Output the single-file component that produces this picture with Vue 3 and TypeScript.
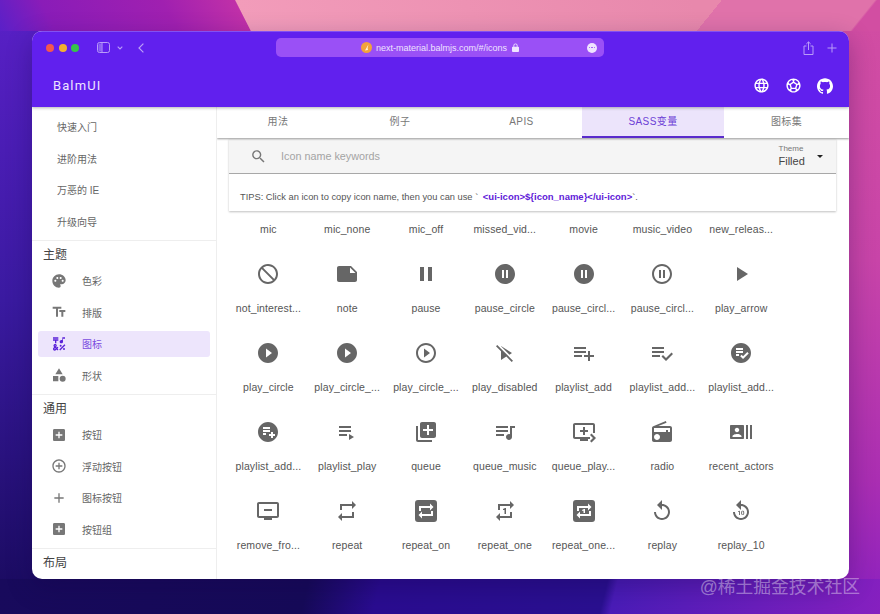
<template>
  <div class="desk">
    <div class="win">
      <header class="top">
        <div class="chrome">
          <span class="light red"></span>
          <span class="light amber"></span>
          <span class="light green"></span>
          <svg class="side-toggle" viewBox="0 0 13 11" width="13" height="11">
            <rect x="0.5" y="0.5" width="12" height="10" rx="2" fill="none" stroke="#b99cf8" />
            <rect x="1.5" y="1.5" width="3" height="8" fill="#8d62f3" />
            <line x1="5" y1="1" x2="5" y2="10" stroke="#b99cf8" />
          </svg>
          <svg class="chev" viewBox="0 0 6 4" width="6" height="4">
            <path d="M.7.7 3 3l2.3-2.3" fill="none" stroke="#b99cf8" stroke-width="1.1" />
          </svg>
          <svg class="back" viewBox="0 0 6 10" width="6" height="10">
            <path d="M5.4.6 1 5l4.4 4.4" fill="none" stroke="#b99cf8" stroke-width="1.2" />
          </svg>
          <div class="address">
            <svg class="favicon" viewBox="0 0 11 11" width="11" height="11">
              <circle cx="5.5" cy="5.5" r="5.5" fill="#f2a33a" />
              <path d="M4 8.5 7.4 2.5 6.6 6 7 8z" fill="#fff3d8" />
            </svg>
            <span class="url">next-material.balmjs.com/#/icons</span>
            <svg class="lock" viewBox="0 0 8 10" width="7" height="9">
              <path d="M1 4h.6V2.8a2.4 2.4 0 0 1 4.8 0V4H7a1 1 0 0 1 1 1v4a1 1 0 0 1-1 1H1a1 1 0 0 1-1-1V5a1 1 0 0 1 1-1zm1.6 0h2.8V2.8a1.4 1.4 0 0 0-2.8 0V4z" fill="#efe4ff" />
            </svg>
            <span class="more"><i></i><i></i><i></i></span>
          </div>
          <svg class="share" viewBox="0 0 11 14" width="11" height="14">
            <path d="M3.5 5H1v8.5h9V5H7.5M5.5 9V1M3.3 3 5.5.9 7.7 3" fill="none" stroke="#b99cf8" stroke-width="1" />
          </svg>
          <svg class="plus" viewBox="0 0 10 10" width="10" height="10">
            <path d="M5 .5v9M.5 5h9" stroke="#b99cf8" stroke-width="1" />
          </svg>
        </div>
        <div class="appbar">
          <span class="brand">BalmUI</span>
          <div class="actions">
            <svg v-for="a in appActions" :key="a.name" viewBox="0 0 24 24" :width="a.size" :height="a.size" fill="#fff">
              <path :d="a.d" />
            </svg>
          </div>
        </div>
      </header>

      <div class="body">
        <aside class="side">
          <section v-for="(group, gi) in nav" :key="gi" class="group">
            <h4 v-if="group.title">{{ group.title }}</h4>
            <a
              v-for="item in group.items"
              :key="item.label"
              class="nav-item"
              :class="{ active: item.active, plain: !item.icon }"
            >
              <svg v-if="item.icon" viewBox="0 0 24 24" width="16" height="16" fill="currentColor">
                <path :d="item.icon" fill-rule="evenodd" />
              </svg>
              <span>{{ item.label }}</span>
            </a>
          </section>
        </aside>

        <main class="main">
          <nav class="tabs">
            <a v-for="t in tabs" :key="t.label" class="tab" :class="{ on: t.on }" :style="{ width: t.w + 'px' }">{{ t.label }}</a>
          </nav>

          <div class="panel">
            <div class="search">
              <svg viewBox="0 0 24 24" width="17" height="17" fill="#777">
                <path d="M15.5 14h-.79l-.28-.27C15.41 12.59 16 11.11 16 9.5 16 5.91 13.09 3 9.5 3S3 5.91 3 9.5 5.91 16 9.5 16c1.61 0 3.09-.59 4.23-1.57l.27.28v.79l5 4.99L20.49 19l-4.99-5zm-6 0C7.01 14 5 11.99 5 9.5S7.01 5 9.5 5 14 7.01 14 9.5 11.99 14 9.5 14z" />
              </svg>
              <span class="placeholder">Icon name keywords</span>
              <div class="theme">
                <small>Theme</small>
                <span>Filled</span>
              </div>
              <i class="caret"></i>
            </div>
            <p class="tips">
              TIPS: Click an icon to copy icon name, then you can use `
              <code>&lt;ui-icon&gt;${icon_name}&lt;/ui-icon&gt;</code>`.
            </p>
          </div>

          <div class="grid">
            <div v-for="(ic, i) in icons" :key="i" class="cell">
              <svg v-if="ic.d" viewBox="0 0 24 24" width="24" height="24" fill="#666">
                <path :d="ic.d" fill-rule="evenodd" />
              </svg>
              <span class="name">{{ ic.name }}</span>
            </div>
          </div>
        </main>
      </div>
    </div>
    <span class="mark">@稀土掘金技术社区</span>
  </div>
</template>

<script setup lang="ts">
const circle = 'M12 2C6.48 2 2 6.48 2 12s4.48 10 10 10 10-4.48 10-10S17.52 2 12 2z'
const addBox = 'M19 3H5c-1.11 0-2 .9-2 2v14c0 1.1.89 2 2 2h14c1.1 0 2-.9 2-2V5c0-1.1-.9-2-2-2zm-2 10h-4v4h-2v-4H7v-2h4V7h2v4h4v2z'
const squareOn = 'M4 1h16a3 3 0 0 1 3 3v16a3 3 0 0 1-3 3H4a3 3 0 0 1-3-3V4a3 3 0 0 1 3-3z'
const repeatInner = 'M5 7h11V4.5L19.5 8 16 11.5V9H7v3H5zM19 17H8v2.5L4.5 16 8 12.5V15h9v-3h2z'

const appActions = [
  {
    name: 'language',
    size: 17,
    d: 'M11.99 2C6.47 2 2 6.48 2 12s4.47 10 9.99 10C17.52 22 22 17.52 22 12S17.52 2 11.99 2zm6.93 6h-2.95c-.32-1.25-.78-2.45-1.38-3.56 1.84.63 3.37 1.91 4.33 3.56zM12 4.04c.83 1.2 1.48 2.53 1.91 3.96h-3.82c.43-1.43 1.08-2.76 1.91-3.96zM4.26 14C4.1 13.36 4 12.69 4 12s.1-1.36.26-2h3.38c-.08.66-.14 1.32-.14 2 0 .68.06 1.34.14 2H4.26zm.82 2h2.95c.32 1.25.78 2.45 1.38 3.56-1.84-.63-3.37-1.9-4.33-3.56zm2.95-8H5.08c.96-1.66 2.49-2.93 4.33-3.56C8.81 5.55 8.35 6.75 8.03 8zM12 19.96c-.83-1.2-1.48-2.53-1.91-3.96h3.82c-.43 1.43-1.08 2.76-1.91 3.96zM14.34 14H9.66c-.09-.66-.16-1.32-.16-2 0-.68.07-1.35.16-2h4.68c.09.65.16 1.32.16 2 0 .68-.07 1.34-.16 2zm.25 5.56c.6-1.11 1.06-2.31 1.38-3.56h2.95c-.96 1.65-2.49 2.93-4.33 3.56zM16.36 14c.08-.66.14-1.32.14-2 0-.68-.06-1.34-.14-2h3.38c.16.64.26 1.31.26 2s-.1 1.36-.26 2h-3.38z'
  },
  {
    name: 'soccer',
    size: 17,
    d: 'M12 2C6.48 2 2 6.48 2 12s4.48 10 10 10 10-4.48 10-10S17.52 2 12 2zm1 3.3l1.35-.95c1.82.56 3.37 1.76 4.38 3.34l-.39 1.34-1.35.46L13 6.7V5.3zm-3.35-.95L11 5.3v1.4L7.01 9.49l-1.35-.46-.39-1.34c1.01-1.57 2.56-2.77 4.38-3.34zM7.08 17.11l-1.14.1C4.73 15.81 4 13.99 4 12c0-.12.01-.23.02-.35l1-.73 1.38.48 1.46 4.34-.78 1.37zm7.42 2.48c-.79.26-1.63.41-2.5.41s-1.71-.15-2.5-.41l-.69-1.49.64-1.1h5.11l.64 1.11-.7 1.48zM14.27 15H9.73l-1.35-4.02L12 8.44l3.63 2.54L14.27 15zm3.79 2.21l-1.14-.1-.79-1.37 1.46-4.34 1.39-.47 1 .73c.01.11.02.22.02.34 0 1.99-.73 3.81-1.94 5.21z'
  },
  {
    name: 'github',
    size: 16,
    d: 'M12 .297c-6.63 0-12 5.373-12 12 0 5.303 3.438 9.8 8.205 11.385.6.113.82-.258.82-.577 0-.285-.01-1.04-.015-2.04-3.338.724-4.042-1.61-4.042-1.61C4.422 18.07 3.633 17.7 3.633 17.7c-1.087-.744.084-.729.084-.729 1.205.084 1.838 1.236 1.838 1.236 1.07 1.835 2.809 1.305 3.495.998.108-.776.417-1.305.76-1.605-2.665-.3-5.466-1.332-5.466-5.93 0-1.31.465-2.38 1.235-3.22-.135-.303-.54-1.523.105-3.176 0 0 1.005-.322 3.3 1.23.96-.267 1.98-.399 3-.405 1.02.006 2.04.138 3 .405 2.28-1.552 3.285-1.23 3.285-1.23.645 1.653.24 2.873.12 3.176.765.84 1.23 1.91 1.23 3.22 0 4.61-2.805 5.625-5.475 5.92.42.36.81 1.096.81 2.22 0 1.606-.015 2.896-.015 3.286 0 .315.21.69.825.57C20.565 22.092 24 17.592 24 12.297c0-6.627-5.373-12-12-12'
  }
]

const nav = [
  {
    title: '',
    items: [{ label: '快速入门' }, { label: '进阶用法' }, { label: '万恶的 IE' }, { label: '升级向导' }]
  },
  {
    title: '主题',
    items: [
      {
        label: '色彩',
        icon: 'M12 2C6.49 2 2 6.49 2 12s4.49 10 10 10c1.38 0 2.5-1.12 2.5-2.5 0-.61-.23-1.2-.64-1.67-.08-.1-.13-.21-.13-.33 0-.28.22-.5.5-.5H16c3.31 0 6-2.69 6-6 0-4.96-4.49-9-10-9zm5.5 11c-.83 0-1.5-.67-1.5-1.5s.67-1.5 1.5-1.5 1.5.67 1.5 1.5-.67 1.5-1.5 1.5zm-3-4c-.83 0-1.5-.67-1.5-1.5S13.67 6 14.5 6s1.5.67 1.5 1.5S15.33 9 14.5 9zM5 11.5c0-.83.67-1.5 1.5-1.5s1.5.67 1.5 1.5S7.33 13 6.5 13 5 12.33 5 11.5zm6-4c0 .83-.67 1.5-1.5 1.5S8 8.33 8 7.5 8.67 6 9.5 6s1.5.67 1.5 1.5z'
      },
      { label: '排版', icon: 'M2.5 4v3h5v12h3V7h5V4h-13zm19 5h-9v3h3v7h3v-7h3V9z' },
      {
        label: '图标',
        active: true,
        icon: 'M3 2h8v2H3zM6 11h2V7h3V5H3v2h3zM12.4 20.18l7.78-7.78 1.42 1.42-7.78 7.78zM13 14.5a1.5 1.5 0 1 0 3 0 1.5 1.5 0 1 0-3 0zM18 19.5a1.5 1.5 0 1 0 3 0 1.5 1.5 0 1 0-3 0zM15.5 11c1.38 0 2.5-1.12 2.5-2.5V4h3V2h-4v4.51C16.58 6.19 16.07 6 15.5 6 14.12 6 13 7.12 13 8.5s1.12 2.5 2.5 2.5zM9.74 15.96l-1.41 1.41-.71-.71.35-.35c.98-.98.98-2.56 0-3.54-.49-.49-1.13-.73-1.77-.73-.64 0-1.28.24-1.77.73-.98.98-.98 2.56 0 3.54l.35.35-1.06 1.06c-.98.98-.98 2.56 0 3.54.5.5 1.14.74 1.78.74s1.28-.24 1.77-.73l1.06-1.06 1.41 1.41 1.41-1.41-1.41-1.41 1.41-1.41-1.41-1.41zM5.85 14.2c.12-.12.26-.15.35-.15s.23.03.35.15c.19.2.19.51 0 .71l-.35.35-.35-.36c-.2-.19-.2-.51 0-.7zm0 5.65c-.12.12-.26.15-.35.15s-.23-.03-.35-.15c-.2-.2-.2-.51 0-.71l1.06-1.06.71.71-1.07 1.06z'
      },
      { label: '形状', icon: 'M12 2l-5.5 9h11zM13 17.5a4.5 4.5 0 1 0 9 0 4.5 4.5 0 1 0-9 0zM3 13.5h8v8H3z' }
    ]
  },
  {
    title: '通用',
    items: [
      { label: '按钮', icon: addBox },
      {
        label: '浮动按钮',
        icon: 'M13 7h-2v4H7v2h4v4h2v-4h4v-2h-4V7zm-1-5C6.48 2 2 6.48 2 12s4.48 10 10 10 10-4.48 10-10S17.52 2 12 2zm0 18c-4.41 0-8-3.59-8-8s3.59-8 8-8 8 3.59 8 8-3.59 8-8 8z'
      },
      { label: '图标按钮', icon: 'M19 13h-6v6h-2v-6H5v-2h6V5h2v6h6v2z' },
      { label: '按钮组', icon: addBox }
    ]
  },
  { title: '布局', items: [] }
]

const tabs = [
  { label: '用法', w: 122 },
  { label: '例子', w: 122 },
  { label: 'APIS', w: 121 },
  { label: 'SASS变量', w: 142, on: true },
  { label: '图标集', w: 125 }
]

const icons: { name: string; d?: string }[] = [
  { name: 'mic' },
  { name: 'mic_none' },
  { name: 'mic_off' },
  { name: 'missed_vid...' },
  { name: 'movie' },
  { name: 'music_video' },
  { name: 'new_releas...' },
  {
    name: 'not_interest...',
    d: 'M12 2C6.48 2 2 6.48 2 12s4.48 10 10 10 10-4.48 10-10S17.52 2 12 2zm0 18c-4.42 0-8-3.58-8-8 0-1.85.63-3.55 1.69-4.9L16.9 18.31C15.55 19.37 13.85 20 12 20zm6.31-3.1L7.1 5.69C8.45 4.63 10.15 4 12 4c4.42 0 8 3.58 8 8 0 1.85-.63 3.55-1.69 4.9z'
  },
  { name: 'note', d: 'M22 10l-6-6H4c-1.1 0-2 .9-2 2v12.01c0 1.1.9 1.99 2 1.99l16-.01c1.1 0 2-.89 2-1.99v-8zm-7-4.5l5.5 5.5H15V5.5z' },
  { name: 'pause', d: 'M6 19h4V5H6v14zm8-14v14h4V5h-4z' },
  { name: 'pause_circle', d: circle + 'M9 8h2v8H9zM13 8h2v8h-2z' },
  { name: 'pause_circl...', d: circle + 'M9 8h2v8H9zM13 8h2v8h-2z' },
  {
    name: 'pause_circl...',
    d: 'M9 16h2V8H9v8zm3-14C6.48 2 2 6.48 2 12s4.48 10 10 10 10-4.48 10-10S17.52 2 12 2zm0 18c-4.41 0-8-3.59-8-8s3.59-8 8-8 8 3.59 8 8-3.59 8-8 8zm1-4h2V8h-2v8z'
  },
  { name: 'play_arrow', d: 'M8 5v14l11-7z' },
  { name: 'play_circle', d: circle + 'M10 7.5v9l6-4.5z' },
  { name: 'play_circle_...', d: circle + 'M10 7.5v9l6-4.5z' },
  {
    name: 'play_circle_...',
    d: 'M10 16.5l6-4.5-6-4.5v9zM12 2C6.48 2 2 6.48 2 12s4.48 10 10 10 10-4.48 10-10S17.52 2 12 2zm0 18c-4.41 0-8-3.59-8-8s3.59-8 8-8 8 3.59 8 8-3.59 8-8 8z'
  },
  { name: 'play_disabled', d: 'M8 5.19V5l11 7-2.55 1.63L8 5.19zm12 14.54-5.11-5.11L8 7.73 4.27 4 3 5.27l5 5V19l5.33-3.4 5.4 5.4L20 19.73z' },
  { name: 'playlist_add', d: 'M14 10H2v2h12v-2zm0-4H2v2h12V6zm4 8v-4h-2v4h-4v2h4v4h2v-4h4v-2h-4zM2 16h8v-2H2v2z' },
  { name: 'playlist_add...', d: 'M14 10H2v2h12v-2zm0-4H2v2h12V6zM2 16h8v-2H2v2zm19.5-4.5L23 13l-6.99 7-4.51-4.5L13 14l3.01 3 5.49-5.5z' },
  { name: 'playlist_add...', d: circle + 'M7 7h7v2H7zM7 10h7v2H7zM7 13h3v2H7zM14.05 18l-2.83-2.83 1.41-1.41 1.41 1.41L18.29 11l1.42 1.41z' },
  { name: 'playlist_add...', d: circle + 'M7 7h7v2H7zM7 10h7v2H7zM7 13h3v2H7zM15 12h2v2h2v2h-2v2h-2v-2h-2v-2h2z' },
  { name: 'playlist_play', d: 'M4 10h12v2H4zm0-4h12v2H4zm0 8h8v2H4zm10 0v6l5-3z' },
  {
    name: 'queue',
    d: 'M4 6H2v14c0 1.1.9 2 2 2h14v-2H4V6zm16-4H8c-1.1 0-2 .9-2 2v12c0 1.1.9 2 2 2h12c1.1 0 2-.9 2-2V4c0-1.1-.9-2-2-2zm-1 9h-4v4h-2v-4H9V9h4V5h2v4h4v2z'
  },
  {
    name: 'queue_music',
    d: 'M15 6H3v2h12V6zm0 4H3v2h12v-2zM3 16h8v-2H3v2zM17 6v8.18c-.31-.11-.65-.18-1-.18-1.66 0-3 1.34-3 3s1.34 3 3 3 3-1.34 3-3V8h3V6h-5z'
  },
  {
    name: 'queue_play...',
    d: 'M21 3H3c-1.11 0-2 .89-2 2v12c0 1.1.89 2 2 2h5v2h8v-2h2v-2H3V5h18v8h2V5c0-1.11-.9-2-2-2zm-8 7V7h-2v3H8v2h3v3h2v-3h3v-2h-3zm11 8l-4.5 4.5L18 21l3-3-3-3 1.5-1.5L24 18z'
  },
  {
    name: 'radio',
    d: 'M3.24 6.15C2.51 6.43 2 7.17 2 8v12c0 1.1.89 2 2 2h16c1.11 0 2-.9 2-2V8c0-1.11-.89-2-2-2H8.3l8.26-3.34L15.88 1 3.24 6.15zM7 20c-1.66 0-3-1.34-3-3s1.34-3 3-3 3 1.34 3 3-1.34 3-3 3zm13-8h-2v-2h-2v2H4V8h16v4z'
  },
  {
    name: 'recent_actors',
    d: 'M21 5v14h2V5h-2zm-4 14h2V5h-2v14zM14 5H2c-.55 0-1 .45-1 1v12c0 .55.45 1 1 1h12c.55 0 1-.45 1-1V6c0-.55-.45-1-1-1zM8 7.75c1.24 0 2.25 1.01 2.25 2.25S9.24 12.25 8 12.25 5.75 11.24 5.75 10 6.76 7.75 8 7.75zM12.5 17h-9v-.75c0-1.5 3-2.25 4.5-2.25s4.5.75 4.5 2.25V17z'
  },
  {
    name: 'remove_fro...',
    d: 'M21 3H3c-1.11 0-2 .89-2 2v12c0 1.1.89 2 2 2h5v2h8v-2h5c1.1 0 1.99-.9 1.99-2L23 5c0-1.11-.9-2-2-2zm0 14H3V5h18v12zm-5-7v2H8v-2h8z'
  },
  { name: 'repeat', d: 'M7 7h10v3l4-4-4-4v3H5v6h2V7zm10 10H7v-3l-4 4 4 4v-3h12v-6h-2v4z' },
  { name: 'repeat_on', d: squareOn + repeatInner },
  { name: 'repeat_one', d: 'M7 7h10v3l4-4-4-4v3H5v6h2V7zm10 10H7v-3l-4 4 4 4v-3h12v-6h-2v4zm-4-2V9h-1l-2 1v1h1.5v4H13z' },
  { name: 'repeat_one...', d: squareOn + repeatInner + 'M13 14V10h-1l-2 .9v.9h1.5V14z' },
  { name: 'replay', d: 'M12 5V1L7 6l5 5V7c3.31 0 6 2.69 6 6s-2.69 6-6 6-6-2.69-6-6H4c0 4.42 3.58 8 8 8s8-3.58 8-8-3.58-8-8-8z' },
  {
    name: 'replay_10',
    d: 'M12 5V1L7 6l5 5V7c3.31 0 6 2.69 6 6s-2.69 6-6 6-6-2.69-6-6H4c0 4.42 3.58 8 8 8s8-3.58 8-8-3.58-8-8-8zm-1.1 11H10v-3.3L9 13v-.7l1.8-.6h.1V16zm4.3-1.8c0 .3 0 .6-.1.8l-.3.6s-.3.3-.5.3-.4.1-.6.1-.4 0-.6-.1-.3-.2-.5-.3-.2-.3-.3-.6-.1-.5-.1-.8v-.7c0-.3 0-.6.1-.8l.3-.6s.3-.3.5-.3.4-.1.6-.1.4 0 .6.1c.2.1.3.2.5.3s.2.3.3.6.1.5.1.8v.7zm-.9-.8v-.5s-.1-.2-.1-.3-.1-.1-.2-.2-.2-.1-.3-.1-.2 0-.3.1l-.2.2s-.1.2-.1.3v2s.1.2.1.3.1.1.2.2.2.1.3.1.2 0 .3-.1l.2-.2s.1-.2.1-.3v-1.5z'
  }
]
</script>

<style>
html,
body {
  margin: 0;
  height: 100%;
  overflow: hidden;
}
</style>

<style scoped>
.desk {
  position: relative;
  box-sizing: border-box;
  width: 880px;
  height: 614px;
  padding: 31px 31px 35px 32px;
  font-family: 'Liberation Sans', 'Noto Sans CJK SC', sans-serif;
  overflow: hidden;
  /* wallpaper: strips round the window, each with its own wedges */
  background:
    linear-gradient(129deg, transparent 0 561px, #e072aa 561px 680px, #d24ea2 682px) 0 0 / 100% 31px no-repeat,
    linear-gradient(63deg, #5a20c8 0, #8a1cb8 50px, #a020b0 158px, #c030a8 223px, #f29cba 224px, #e888ac 630px) 0 0 / 100% 31px no-repeat,
    linear-gradient(104deg, #180a5c 0, #160a58 300px, #2a0c90 370px, #2a1090 590px, #4a1cb8 600px, #8a20c0 880px) 0 100% / 100% 35px no-repeat,
    linear-gradient(180deg, #d24ea2 0, #c844a8 260px, #aa2eb2 480px, #8a20c0 100%) 100% 0 / 42px 100% no-repeat,
    linear-gradient(180deg, #5a20c8 0, #3a1aa0 300px, #180a5c 100%) 0 0 / 43px 100% no-repeat;
}

.win {
  display: flex;
  flex-direction: column;
  height: 100%;
  border-radius: 10px;
  overflow: hidden;
  background: #fff;
  box-shadow: 0 8px 26px rgba(20, 0, 70, 0.3);
}

.top {
  flex: none;
  height: 76px;
  background: #6120ee;
  color: #fff;
  position: relative;
  z-index: 2;
  box-shadow: 0 1px 3px rgba(0, 0, 0, 0.3), inset 0 1px 0 rgba(255, 255, 255, 0.22);
}

.chrome {
  display: flex;
  align-items: center;
  height: 33px;
  padding-left: 14px;
}
.chrome > * {
  flex: none;
}

.light {
  width: 8px;
  height: 8px;
  border-radius: 50%;
  margin-right: 4.5px;
}
.red {
  background: #f3574f;
}
.amber {
  background: #f4b02f;
}
.green {
  background: #36c34a;
}

.side-toggle {
  margin-left: 13.5px;
}
.chev {
  margin-left: 7px;
}
.back {
  margin-left: 15px;
}

.address {
  display: flex;
  align-items: center;
  justify-content: center;
  position: relative;
  box-sizing: border-box;
  width: 328px;
  height: 19px;
  margin-left: 132px;
  border-radius: 5px;
  background: #9a50f6;
  color: #efe4ff;
  font-size: 9px;
}

.favicon {
  margin-right: 4px;
}

.lock {
  margin-left: 5px;
}

.more {
  position: absolute;
  right: 7px;
  top: 4.5px;
  display: flex;
  align-items: center;
  justify-content: center;
  gap: 1px;
  width: 10px;
  height: 10px;
  border-radius: 50%;
  background: #efe4ff;
}
.more i {
  width: 1.5px;
  height: 1.5px;
  border-radius: 50%;
  background: #9a50f6;
}

.share {
  margin-left: 199px;
}
.plus {
  margin-left: 13px;
}

.appbar {
  display: flex;
  align-items: center;
  justify-content: space-between;
  height: 43px;
  padding: 0 16px 0 21px;
}

.brand {
  font-family: 'Roboto', sans-serif;
  font-size: 13px;
  letter-spacing: 1.1px;
  color: #eee4ff;
}

.actions {
  display: flex;
  align-items: center;
  gap: 15px;
}

.body {
  flex: 1;
  display: flex;
  min-height: 0;
}

.side {
  flex: none;
  width: 184px;
  border-right: 1px solid #eee;
  color: #666;
  font-size: 10px;
  overflow: hidden;
}

.group {
  padding: 0 6px;
  border-bottom: 1px solid #eee;
}
.group:first-child {
  padding-top: 6.5px;
}
.group:last-child {
  border-bottom: 0;
}

.group h4 {
  margin: 0;
  height: 27px;
  padding-left: 5px;
  line-height: 28px;
  font-size: 12px;
  font-weight: 400;
  color: #444;
}

.nav-item {
  display: flex;
  align-items: center;
  gap: 15px;
  height: 26px;
  margin-bottom: 5.5px;
  padding-left: 13px;
  border-radius: 3px;
  color: #666;
}
.nav-item svg {
  color: #777;
}
.nav-item.plain {
  padding-left: 19px;
}
.nav-item.active {
  background: #ede5fc;
  color: #7a4ce0;
}
.nav-item.active svg {
  color: #5a22d8;
}

.main {
  flex: 1;
  min-width: 0;
  display: flex;
  flex-direction: column;
  overflow: hidden;
}

.tabs {
  flex: none;
  display: flex;
  height: 31px;
  box-shadow: 0 1px 2px rgba(0, 0, 0, 0.4);
  position: relative;
  z-index: 1;
}

.tab {
  box-sizing: border-box;
  flex: none;
  text-align: center;
  line-height: 30px;
  font-size: 10px;
  letter-spacing: 0.4px;
  color: #777;
}
.tab.on {
  background: #ece4fb;
  color: #6d3fd6;
  border-bottom: 2px solid #5a2ccc;
}

.panel {
  flex: none;
  width: 607px;
  margin: 1px 0 0 12px;
  box-shadow: 0 1px 2px rgba(0, 0, 0, 0.25);
}

.search {
  display: flex;
  align-items: center;
  box-sizing: border-box;
  height: 35px;
  padding-left: 21px;
  background: #f5f5f5;
  border-bottom: 1px solid #a8a8a8;
  font-size: 11px;
}

.placeholder {
  margin-left: 14px;
  color: #a4a4a4;
  flex: 1;
  font-size: 10.8px;
}

.theme {
  display: flex;
  flex-direction: column;
  width: 38.5px;
  margin-bottom: 2px;
  color: #444;
}
.theme small {
  font-size: 8px;
  line-height: 9px;
  color: #777;
  margin-bottom: 2px;
}
.theme span {
  line-height: 12px;
}

.caret {
  width: 0;
  height: 0;
  margin-right: 13px;
  border-left: 3.5px solid transparent;
  border-right: 3.5px solid transparent;
  border-top: 3.5px solid #222;
}

.tips {
  margin: 0;
  padding: 17px 11px 8px;
  line-height: 12px;
  font-size: 9.3px;
  color: #555;
  background: #fff;
}
.tips code {
  margin-left: 2px;
  font-family: inherit;
  font-size: 9.5px;
  font-weight: 700;
  color: #6020d8;
}

.grid {
  display: grid;
  grid-template-columns: repeat(7, 78.8px);
  row-gap: 26px;
  margin: 11px 0 0 12px;
}

.cell {
  display: flex;
  flex-direction: column;
  align-items: center;
}

.name {
  margin-top: 15px;
  font-size: 10.5px;
  line-height: 14px;
  letter-spacing: 0.1px;
  color: #555;
  white-space: nowrap;
}
.cell:nth-child(-n + 7) .name {
  margin-top: 0;
}

.mark {
  position: absolute;
  right: 20px;
  bottom: 16px;
  font-size: 17.8px;
  color: rgba(255, 255, 255, 0.4);
}
</style>
